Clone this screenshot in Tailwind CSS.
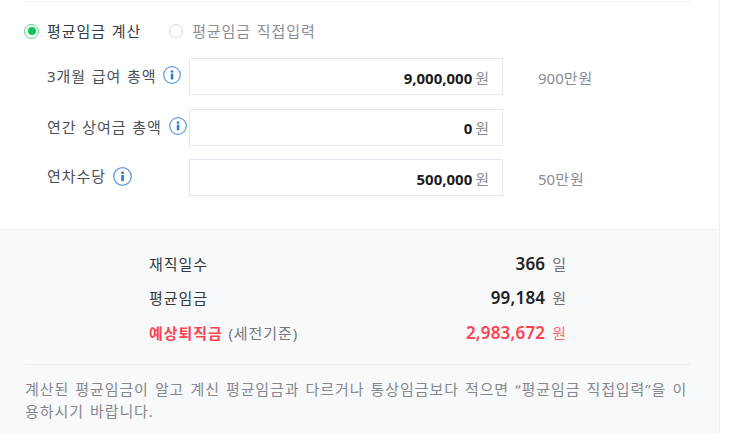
<!DOCTYPE html>
<html lang="ko">
<head>
    <meta charset="UTF-8">
    <title>퇴직금 계산</title>
    <script src="https://cdn.jsdelivr.net/npm/@tailwindcss/browser@4"></script>
</head>
<body class="bg-white font-['Noto_Sans','Noto_Sans_CJK_KR',sans-serif] text-[15px] tracking-[0.92px] [word-spacing:1px] overflow-hidden">
    <div class="w-[720px] h-[433px] border-r border-[#eef0f3] flex flex-col">
        <section class="h-[229px] pl-[25px] pr-[29px]">
            <div class="h-[1px] mt-[1px] bg-[#f0f1f4]"></div>
            <div class="flex items-center h-[20px] mt-[19px] leading-[20px]">
                <span class="w-[15px] h-[15px] rounded-full border-[1.5px] border-[#4fd58a] flex items-center justify-center mr-[8px] -ml-[1px]">
                    <span class="w-[8px] h-[8px] rounded-full bg-[#0fc25a]"></span>
                </span>
                <span class="text-[#333a45]">평균임금 계산</span>
                <span class="w-[14px] h-[14px] rounded-full border-[1.5px] border-[#d8d8d8] ml-[28px] mr-[9px]"></span>
                <span class="text-[#8a8d93]">평균임금 직접입력</span>
            </div>

            <div class="flex items-center h-[37px] mt-[17px]">
                <div class="w-[164px] pl-[22px] flex items-center shrink-0 -mt-[1px]">
                    <span class="text-[#4a4f58] whitespace-nowrap">3개월 급여 총액</span>
                    <svg class="ml-[7px] -mt-[2px] shrink-0" width="18" height="18" viewBox="0 0 18 18"><circle cx="9" cy="9" r="8.3" fill="none" stroke="#5b9bdc" stroke-width="1.2"/><rect x="7.8" y="7.6" width="2.5" height="5.8" fill="#2a7bd0"/><rect x="7.8" y="4.4" width="2.5" height="2.2" fill="#2a7bd0"/></svg>
                </div>
                <div class="w-[314px] h-[37px] border border-[#e3e6ec] flex items-center justify-end pr-[12px] pt-[3px] shrink-0">
                    <b class="text-[#1c1c1c] font-bold tracking-normal">9,000,000</b><span class="text-[#8a8d93] ml-[3px]">원</span>
                </div>
                <span class="ml-[35px] pt-[3px] text-[#8a8d93]"><span class="tracking-normal">900</span>만원</span>
            </div>

            <div class="flex items-center h-[37px] mt-[14px]">
                <div class="w-[164px] pl-[22px] flex items-center shrink-0 -mt-[1px]">
                    <span class="text-[#4a4f58] whitespace-nowrap">연간 상여금 총액</span>
                    <svg class="ml-[7px] -mt-[2px] shrink-0" width="18" height="18" viewBox="0 0 18 18"><circle cx="9" cy="9" r="8.3" fill="none" stroke="#5b9bdc" stroke-width="1.2"/><rect x="7.8" y="7.6" width="2.5" height="5.8" fill="#2a7bd0"/><rect x="7.8" y="4.4" width="2.5" height="2.2" fill="#2a7bd0"/></svg>
                </div>
                <div class="w-[314px] h-[37px] border border-[#e3e6ec] flex items-center justify-end pr-[12px] pt-[2px] shrink-0">
                    <b class="text-[#1c1c1c] font-bold tracking-normal">0</b><span class="text-[#8a8d93] ml-[3px]">원</span>
                </div>
            </div>

            <div class="flex items-center h-[37px] mt-[13px]">
                <div class="w-[164px] pl-[22px] flex items-center shrink-0 -mt-[3px]">
                    <span class="text-[#4a4f58] whitespace-nowrap">연차수당</span>
                    <svg class="ml-[7px] shrink-0" width="19" height="19" viewBox="0 0 18 18"><circle cx="9" cy="9" r="8.3" fill="none" stroke="#5b9bdc" stroke-width="1.2"/><rect x="7.8" y="7.6" width="2.5" height="5.8" fill="#2a7bd0"/><rect x="7.8" y="4.4" width="2.5" height="2.2" fill="#2a7bd0"/></svg>
                </div>
                <div class="w-[314px] h-[37px] border border-[#e3e6ec] flex items-center justify-end pr-[12px] pt-[3px] shrink-0">
                    <b class="text-[#1c1c1c] font-bold tracking-normal">500,000</b><span class="text-[#8a8d93] ml-[3px]">원</span>
                </div>
                <span class="ml-[35px] pt-[3px] text-[#8a8d93]"><span class="tracking-normal">50</span>만원</span>
            </div>
        </section>

        <section class="flex-1 bg-[#f8f9fb] border-t border-[#eef0f3] pl-[25px] pr-[29px]">
            <div class="pt-[24px] h-[135px] border-b border-[#e8eaee]">
                <div class="flex justify-between items-center h-[20px] ml-[124px] mr-[123px]">
                    <span class="text-[#33373e]">재직일수</span>
                    <span class="flex items-center"><b class="text-[17px] tracking-[0.2px] text-[#222] font-semibold">366</b><span class="ml-[7px] text-[#6b6f76]">일</span></span>
                </div>
                <div class="flex justify-between items-center h-[20px] mt-[14px] ml-[124px] mr-[123px]">
                    <span class="text-[#33373e]">평균임금</span>
                    <span class="flex items-center"><b class="text-[17px] tracking-[0.2px] text-[#222] font-semibold">99,184</b><span class="ml-[7px] text-[#6b6f76]">원</span></span>
                </div>
                <div class="flex justify-between items-center h-[20px] mt-[15px] ml-[124px] mr-[123px]">
                    <span><b class="text-[#fb4450] font-bold">예상퇴직금</b> <span class="text-[#75797f]">(세전기준)</span></span>
                    <span class="flex items-center"><b class="text-[17px] tracking-[0.2px] text-[#fb4450] font-semibold">2,983,672</b><span class="ml-[7px] text-[#fb6a74]">원</span></span>
                </div>
            </div>
            <p class="mt-[13px] text-[15px] leading-[22px] [word-spacing:1.25px] text-[#85888e]">계산된 평균임금이 알고 계신 평균임금과 다르거나 통상임금보다 적으면 “평균임금 직접입력”을 이용하시기 바랍니다.</p>
        </section>
    </div>
</body>
</html>
